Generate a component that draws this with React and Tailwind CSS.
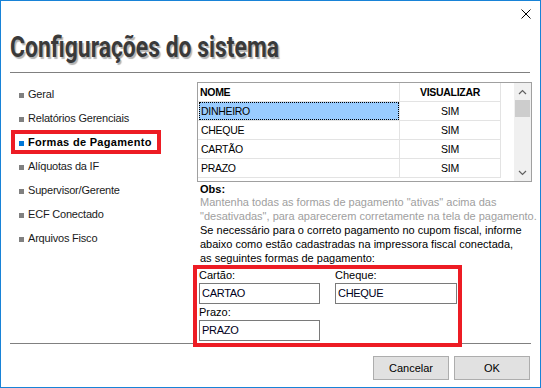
import React from "react";

const menu = [
  "Geral",
  "Relatórios Gerenciais",
  "Formas de Pagamento",
  "Alíquotas da IF",
  "Supervisor/Gerente",
  "ECF Conectado",
  "Arquivos Fisco",
];

const rows = ["DINHEIRO", "CHEQUE", "CARTÃO", "PRAZO"];

export default function App() {
  return (
    <div className="w-[541px] h-[388px] bg-white border border-[#1883d7] flex flex-col overflow-hidden font-['Liberation_Sans',Arial,sans-serif] text-black">
      {/* close row */}
      <div className="h-[29px] flex justify-end pr-[9px] pt-[8px] shrink-0">
        <svg width="10" height="10" viewBox="0 0 10 10" className="block">
          <path d="M0.5 0.5 L9.5 9.5 M9.5 0.5 L0.5 9.5" stroke="#000" strokeWidth="1" fill="none" />
        </svg>
      </div>
      {/* title */}
      <div className="h-[34px] pl-[9px] shrink-0 whitespace-nowrap">
        <div className="inline-block origin-left scale-x-[0.79] font-['Roboto',sans-serif] font-bold text-[29px] leading-[34px] text-[#3a3a3a] [text-shadow:2px_2px_1px_#b4b4b4]">
          Configurações do sistema
        </div>
      </div>
      <div className="mt-[8px] ml-[9px] w-[520px] h-px bg-[#808080] shrink-0" />

      {/* body */}
      <div className="h-[270px] flex shrink-0">
        {/* sidebar */}
        <div className="w-[196px] pt-[9px] shrink-0">
          {menu.map((m, i) => {
            const sel = i === 2;
            return (
              <div
                key={m}
                className={
                  "ml-[10px] w-[150px] h-[24px] pl-[8px] flex items-start gap-[4px] " +
                  (sel ? "shadow-[inset_0_0_0_4px_#ed1c24]" : "")
                }
              >
                <span className={"mt-[11px] w-[5px] h-[5px] shrink-0 " + (sel ? "bg-[#0078d7]" : "bg-[#808080]")} />
                <span
                  className={
                    "text-[11px] leading-[24px] whitespace-nowrap " +
                    (sel ? "font-bold tracking-[0.3px]" : "tracking-[-0.2px] text-[#1a1a1a]")
                  }
                >
                  {m}
                </span>
              </div>
            );
          })}
        </div>

        {/* content */}
        <div className="flex-1 pt-[9px] flex flex-col">
          <div className="w-[335px] h-[100px] border border-[#a0a0a0] flex shrink-0">
            <div className="w-[303px] flex flex-col text-[10.5px] tracking-[-0.3px]">
              <div className="h-[19px] flex border-b border-[#e3e3e3] font-bold">
                <div className="w-[202px] border-r border-[#e3e3e3] pl-[2px] leading-[18px]">NOME</div>
                <div className="w-[101px] border-r border-[#e3e3e3] text-center leading-[18px]">VISUALIZAR</div>
              </div>
              {rows.map((r, i) => (
                <div key={r} className="h-[19px] flex border-b border-[#e3e3e3]">
                  <div className="w-[202px] border-r border-[#e3e3e3] pl-px">
                    {i === 0 ? (
                      <div className="h-full bg-[#99ccff] border border-dotted border-black pl-px leading-[16px]">{r}</div>
                    ) : (
                      <div className="pl-[2px] leading-[18px]">{r}</div>
                    )}
                  </div>
                  <div className="w-[101px] border-r border-[#e3e3e3] text-center leading-[18px]">SIM</div>
                </div>
              ))}
            </div>
            <div className="w-[13px]" />
            <div className="w-[17px] bg-[#f0f0f0] flex flex-col">
              <div className="h-[17px] flex items-center justify-center">
                <svg width="9" height="6" viewBox="0 0 9 6">
                  <path d="M1 5 L4.5 1.5 L8 5" stroke="#606060" strokeWidth="1.2" fill="none" />
                </svg>
              </div>
              <div className="mx-px h-[17px] bg-[#cdcdcd]" />
              <div className="flex-1" />
              <div className="h-[17px] flex items-center justify-center">
                <svg width="9" height="6" viewBox="0 0 9 6">
                  <path d="M1 1 L4.5 4.5 L8 1" stroke="#606060" strokeWidth="1.2" fill="none" />
                </svg>
              </div>
            </div>
          </div>

          <div className="mt-[2px] pl-[3px] text-[11px] leading-[11px] font-bold">Obs:</div>
          <div className="pl-[3px] text-[11px] leading-[14px] text-[#a0a0a0] whitespace-nowrap">
            <div>Mantenha todas as formas de pagamento "ativas" acima das</div>
            <div>"desativadas", para aparecerem corretamente na tela de pagamento.</div>
          </div>
          <div className="pl-[3px] text-[11px] leading-[14px] text-black whitespace-nowrap">
            <div>Se necessário para o correto pagamento no cupom fiscal, informe</div>
            <div>abaixo como estão cadastradas na impressora fiscal conectada,</div>
            <div>as seguintes formas de pagamento:</div>
          </div>

          <div className="relative z-10 ml-[-4px] w-[269px] h-[82px] border-4 border-[#ed1c24] shrink-0">
            <div className="pl-[2px] grid grid-cols-[121px_122px] gap-x-[15px] text-[11px]">
              <div>
                <div className="leading-[12px]">Cartão:</div>
                <div className="mt-[2px] h-[21px] border border-[#7a7a7a] pl-[2px] leading-[19px] tracking-[-0.3px] text-[#000020]">CARTAO</div>
              </div>
              <div>
                <div className="leading-[12px]">Cheque:</div>
                <div className="mt-[2px] h-[21px] border border-[#7a7a7a] pl-[2px] leading-[19px] tracking-[-0.3px] text-[#000020]">CHEQUE</div>
              </div>
              <div className="mt-[2px]">
                <div className="leading-[12px]">Prazo:</div>
                <div className="mt-[2px] h-[21px] border border-[#7a7a7a] pl-[2px] leading-[19px] tracking-[-0.3px] text-[#000020]">PRAZO</div>
              </div>
            </div>
          </div>
        </div>
      </div>

      <div className="ml-[9px] w-[521px] h-px bg-[#808080] shrink-0" />
      <div className="mt-[12px] flex justify-end gap-[5px] pr-[10px] shrink-0">
        <div className="w-[76px] h-[24px] bg-[#e1e1e1] border border-[#adadad] flex items-center justify-center text-[11px]">Cancelar</div>
        <div className="w-[76px] h-[24px] bg-[#e1e1e1] border border-[#adadad] flex items-center justify-center text-[11px]">OK</div>
      </div>
    </div>
  );
}
